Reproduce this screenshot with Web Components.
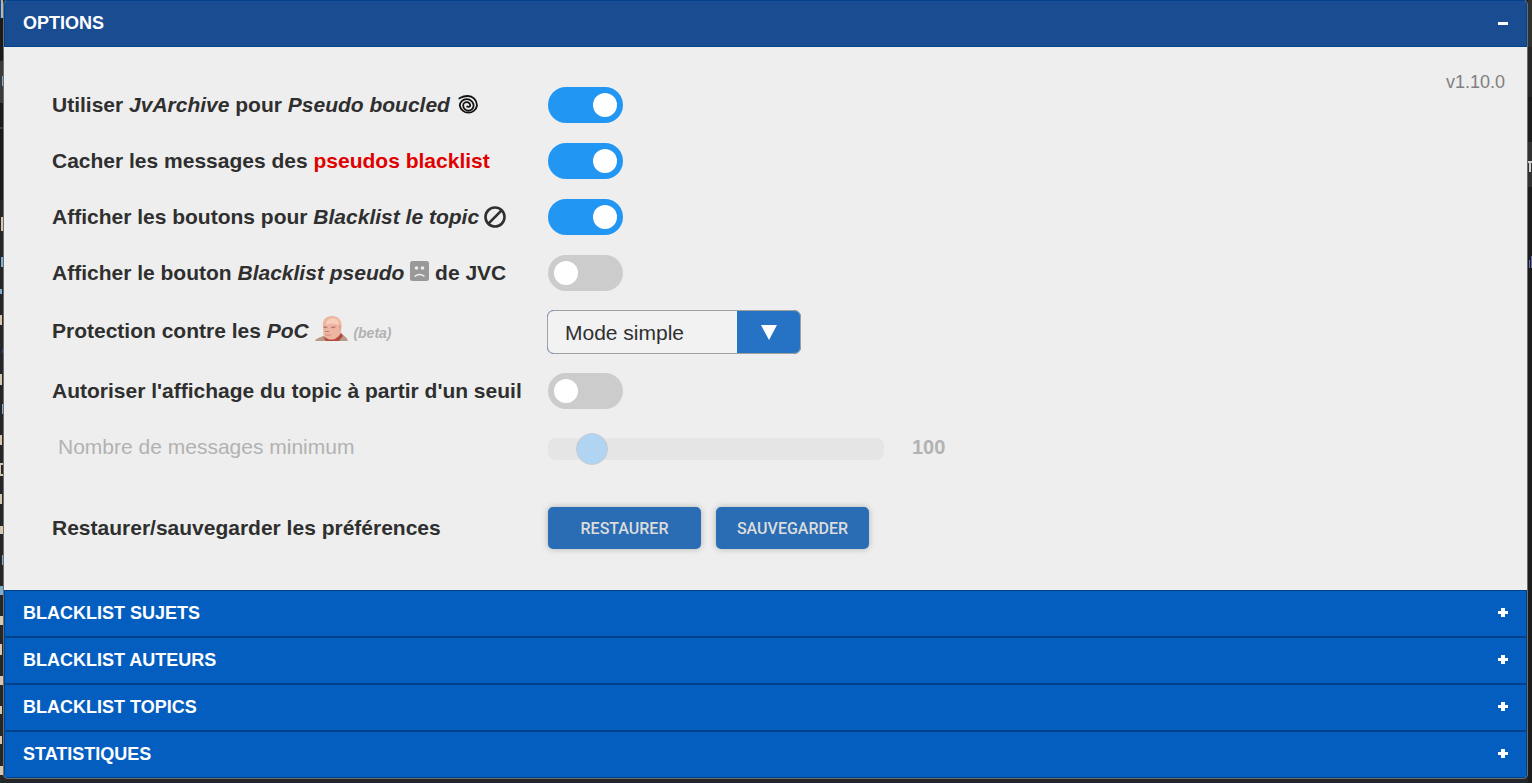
<!DOCTYPE html>
<html lang="fr">
<head>
<meta charset="utf-8">
<title>Options</title>
<style>
  html { background: #252627; }
  body { margin: 0; font-family: "Liberation Sans", Arial, sans-serif; color: #2f2f2f; }
</style>
</head>
<body>
<settings-dialog>
  <settings-section heading="OPTIONS" open>
    <option-list>
      <option-row>
        <span slot="label">Utiliser <i>JvArchive</i> pour <i>Pseudo boucled</i> <glyph-icon name="spiral"></glyph-icon></span>
        <toggle-switch label="Utiliser JvArchive pour Pseudo boucled" checked></toggle-switch>
      </option-row>
      <option-row>
        <span slot="label">Cacher les messages des <span style="color:#e00000">pseudos blacklist</span></span>
        <toggle-switch label="Cacher les messages des pseudos blacklist" checked></toggle-switch>
      </option-row>
      <option-row>
        <span slot="label">Afficher les boutons pour <i>Blacklist le topic</i><glyph-icon name="ban"></glyph-icon></span>
        <toggle-switch label="Afficher les boutons pour Blacklist le topic" checked></toggle-switch>
      </option-row>
      <option-row>
        <span slot="label">Afficher le bouton <i>Blacklist pseudo</i> <glyph-icon name="sad"></glyph-icon> de JVC</span>
        <toggle-switch label="Afficher le bouton Blacklist pseudo de JVC"></toggle-switch>
      </option-row>
      <option-row>
        <span slot="label">Protection contre les <i>PoC</i> <glyph-icon name="face"></glyph-icon> <i style="font-size:14px;color:#b2b2b2">(beta)</i></span>
        <mode-select></mode-select>
      </option-row>
      <option-row>
        <span slot="label">Autoriser l'affichage du topic à partir d'un seuil</span>
        <toggle-switch label="Autoriser l'affichage du topic à partir d'un seuil"></toggle-switch>
      </option-row>
      <option-row muted>
        <span slot="label">Nombre de messages minimum</span>
        <range-slider></range-slider>
      </option-row>
      <option-row spaced>
        <span slot="label">Restaurer/sauvegarder les préférences</span>
        <action-button>RESTAURER</action-button>
        <action-button>SAUVEGARDER</action-button>
      </option-row>
    </option-list>
    <span slot="version">v1.10.0</span>
  </settings-section>
  <settings-section heading="BLACKLIST SUJETS"></settings-section>
  <settings-section heading="BLACKLIST AUTEURS"></settings-section>
  <settings-section heading="BLACKLIST TOPICS"></settings-section>
  <settings-section heading="STATISTIQUES"></settings-section>
</settings-dialog>

<script>
const define = (name, html, setup) => customElements.define(name, class extends HTMLElement {
  connectedCallback() {
    if (this.shadowRoot) return;
    const root = this.attachShadow({ mode: 'open' });
    const t = document.createElement('template');
    t.innerHTML = html;
    root.append(t.content.cloneNode(true));
    if (setup) setup(this, root);
  }
});

define('settings-dialog', `
  <style>
    :host { display: grid; grid-template-columns: 3px 1fr 4px; min-height: 100vh; overflow: hidden; align-items: start; }
    .frame { border: 1px solid #6d6d6d; border-top: 0; border-radius: 5px; overflow: hidden; background: #eee; }
    svg { display: block; width: 100%; height: 783px; }
  </style>
  <svg viewBox="0 0 3 783" preserveAspectRatio="none" shape-rendering="crispEdges" aria-hidden="true">
    <path fill="#b5b5b5" d="M1 0h2v18H1z"/><path fill="#0f4790" d="M0 0h1v18H0z"/><path fill="#1a1a1a" d="M0 18h3v42H0zM0 103h3v97H0z"/>
    <path fill="#3a3b3c" d="M0 61h3v42H0zM0 127h3v2H0z"/>
    <path fill="#7dafd0" d="M2 76h1v10H2zM1 257h2v10H1zM0 289h2v5H0zM2 404h1v10H2zM0 586h3v9H0zM2 555h1v10H2z"/>
    <path fill="#d8c8b0" d="M1 217h2v14H1zM0 315h2v10H0zM0 374h2v11H0zM0 435h2v10H0zM0 463h3v2H0zM0 474h3v2H0zM0 463h1v12H0zM0 494h2v10H0zM0 526h3v8H0zM0 616h3v9H0zM0 644h2v11H0zM0 676h3v9H0zM0 706h2v8H0zM0 736h2v8H0zM0 766h3v9H0z"/>
    <path fill="#283c9a" d="M2 349h1v4H2z"/>
  </svg>
  <div class="frame"><slot></slot></div>
  <svg viewBox="0 0 4 783" preserveAspectRatio="none" shape-rendering="crispEdges" aria-hidden="true">
    <path fill="#303131" d="M0 0h4v47H0zM0 142h4v45H0z"/><path fill="#1b1c1c" d="M0 97h4v45H0zM0 187h4v596H0z"/>
    <path fill="#d0d0d0" d="M0 161h4v2H0zM1 161h2v11H1z"/><path fill="#6b6fb8" d="M1 260h1v8H1zM3 256h1v12H3z"/>
  </svg>`);

define('settings-section', `
  <style>
    :host { display: block; }
    h2 { margin: 0; }
    button { display: flex; justify-content: space-between; align-items: center; box-sizing: border-box; width: 100%; height: 47px;
      margin: 0; padding: 0 18px; border: 1px solid #00428a; background: #045ec0; color: #fff;
      font: bold 18px "Liberation Sans", Arial, sans-serif; cursor: pointer; }
    button[aria-expanded="true"] { background: #194c90; }
    svg { width: 10px; height: 11px; display: block; }
    .panel { display: flex; justify-content: space-between; align-items: flex-start; padding: 40px 22px 41px 48px; }
    .panel[hidden] { display: none; }
    .version { color: #808080; font-size: 18px; line-height: 20px; margin-top: -15px; }
  </style>
  <h2><button type="button"><span></span><svg viewBox="0 0 10 11" shape-rendering="crispEdges" aria-hidden="true"><path fill="#fff"/></svg></button></h2>
  <div class="panel"><slot></slot><div class="version"><slot name="version"></slot></div></div>`,
  (el, root) => {
    const button = root.querySelector('button'), panel = root.querySelector('.panel');
    root.querySelector('button span').textContent = el.getAttribute('heading');
    const show = open => {
      button.setAttribute('aria-expanded', open);
      panel.hidden = !open;
      root.querySelector('path').setAttribute('d', open ? 'M0 4h10v3H0z' : 'M0 3h10v3H0zM3 0h4v9H3z');
    };
    show(el.hasAttribute('open'));
    button.addEventListener('click', () => show(panel.hidden));
  });

define('option-list', `
  <style>:host { display: flex; flex-direction: column; gap: 20px; }</style><slot></slot>`);

define('option-row', `
  <style>
    :host { display: grid; grid-template-columns: 496px auto; align-items: center; font-size: 21px; font-weight: bold; line-height: 24px; }
    .label { white-space: nowrap; }
    .control { display: flex; gap: 15px; align-items: center; }
    :host([muted]) { font-weight: normal; height: 36px; color: #b2b2b2; }
    :host([muted]) .label { padding-left: 6px; }
    :host([spaced]) { margin-top: 22px; }
  </style>
  <div class="label"><slot name="label"></slot></div>
  <div class="control"><slot></slot></div>`);

define('toggle-switch', `
  <style>
    :host { display: block; height: 36px; }
    input { appearance: none; display: block; box-sizing: border-box; width: 75px; height: 36px; margin: 0; padding: 6px;
      border-radius: 18px; background: #ccc; cursor: pointer; }
    input::before { content: ""; display: block; width: 24px; height: 24px; border-radius: 50%; background: #fff; }
    input:checked { background: #2196f3; }
    input:checked::before { margin-left: 39px; }
  </style>
  <input type="checkbox" role="switch">`,
  (el, root) => {
    const input = root.querySelector('input');
    input.checked = el.hasAttribute('checked');
    input.setAttribute('aria-label', el.getAttribute('label'));
  });

define('mode-select', `
  <style>
    :host { display: grid; grid-template-columns: 190px 64px; height: 44px; margin: -1px; border-radius: 7px; overflow: hidden; background: #2672c5; }
    select { appearance: none; grid-area: 1 / 1 / 2 / 3; box-sizing: border-box; margin: 0; padding: 0 18px 0 17px; height: 44px; border: 1px solid #a0a0a0;
      border-radius: 7px; color: #2f2f2f; background: linear-gradient(90deg, #f2f2f2 189px, #2672c5 189px); font: 21px "Liberation Sans", Arial, sans-serif; }
    svg { grid-area: 1 / 2; place-self: center; width: 16px; height: 15px; pointer-events: none; z-index: 1; }
  </style>
  <select aria-label="Protection contre les PoC"><option>Mode simple</option></select>
  <svg viewBox="0 0 16 15" aria-hidden="true"><path fill="#fff" d="M0 0h16L8 15z"/></svg>`);

define('range-slider', `
  <style>
    :host { display: flex; align-items: center; gap: 28px; }
    input { appearance: none; display: block; width: 336px; height: 22px; margin: 4px 0 0; border-radius: 8px; background: #e5e5e5; }
    input::-webkit-slider-thumb { appearance: none; box-sizing: border-box; width: 32px; height: 32px; border: 1px solid #c4ccd2; border-radius: 50%; background: #b0d4f1; }
    output { font-weight: bold; font-size: 20px; }
  </style>
  <input type="range" min="10" max="1000" value="100" disabled aria-label="Nombre de messages minimum"><output>100</output>`);

define('action-button', `
  <style>
    :host { display: block; }
    button { display: block; width: 153px; height: 42px; padding: 0; border: 0; border-radius: 5px; background: #2a6db4; color: #dcdcdc;
      font: 500 16px Roboto, "Liberation Sans", sans-serif; box-shadow: 0 0 6px #00000040; cursor: pointer; }
  </style>
  <button type="button"><slot></slot></button>`);

/* name: [width, height, baseline shift, left margin, drawing] */
const icons = {
  spiral: [20, 20, 1, 2, `<path fill="none" stroke="#111" stroke-width="1.800" d="M.6 3.600C2.500 3.400 3.500 1 9.500 1A9.300 9.500 0 0 1 19 10.500A8.700 8.500 0 0 1 1.800 10.500A6.900 6.300 0 0 1 15.600 10.500A5.200 5.200 0 0 1 5.200 10.500A3.500 3.300 0 0 1 12.200 10.500A1.800 1.800 0 0 1 8.800 10.800"/>`],
  ban: [22, 22, 0, 5, `<g fill="none" stroke="#2f2f2f" stroke-width="2.600"><circle cx="11" cy="11" r="9.500"/><path d="M4.400 17.600 17.600 4.400"/></g>`],
  sad: [19, 20, 3, 0, `<rect width="19" height="20" rx="2.500" fill="#999"/><g fill="#eee"><circle cx="6.500" cy="7" r="1.800"/><circle cx="12.500" cy="7" r="1.800"/></g><path d="M4.500 15.500q5-4 10 0" fill="none" stroke="#eee" stroke-width="1.600"/>`],
  face: [33, 25, 1, 0, `<path fill="#b99c88" d="M0 25c1-3 4-3 8-5l18-3c3 3 6 4 7 8z"/><path fill="#b4493f" d="M8 21l3 4h13l4-5-2-3-6 6h-7z"/><path fill="#eeb5a0" d="M8 10C7 4 11 0 17 0c6 0 10 4 9.500 10 0 4-.5 7-2.500 10l-5 3.500h-5L9 20C7.500 17 8.500 14 8 10z"/><path fill="#f6cdb8" d="M11 6c2-4 8-5 12-2 1 2 1 4 0 5-4-2-8-2-12 0z"/><path fill="#e0988a" d="M8 10q3-1 5 1-2 2-5 1zM16 11q3-2 6-1-2 3-6 2zM10 18q4 1 7 0l-2 2h-4zM24 10l2-1-1 6z"/><path fill="#a87f75" d="M9 11h3v1H9zM16 11h4v1h-4zM10 15h4v1h-4z"/>`]
};
define('glyph-icon', `<style>:host { display: inline-block; } svg { display: block; overflow: visible; }</style><svg aria-hidden="true"></svg>`,
  (el, root) => {
    const [w, h, shift, left, body] = icons[el.getAttribute('name')];
    const svg = root.querySelector('svg');
    svg.setAttribute('viewBox', `0 0 ${w} ${h}`);
    svg.setAttribute('width', w);
    svg.setAttribute('height', h);
    svg.innerHTML = body;
    el.style.cssText = `vertical-align:${shift}px;margin-left:${left}px;height:${h}px;margin-block:-4px`;
  });
</script>
</body>
</html>
